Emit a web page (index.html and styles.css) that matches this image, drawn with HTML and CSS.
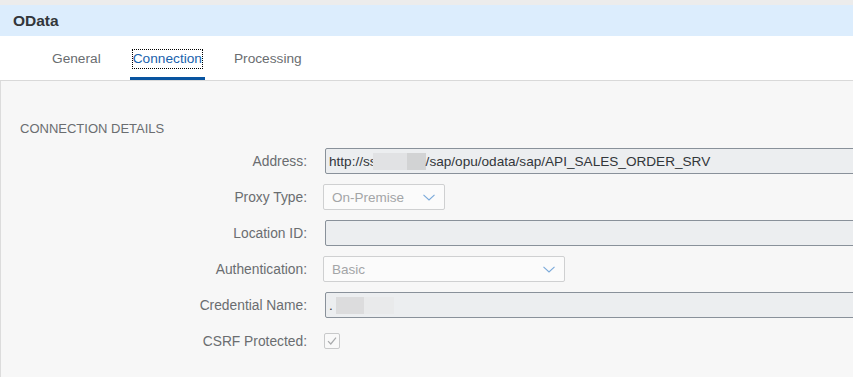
FILE: index.html
```html
<!DOCTYPE html>
<html>

<head>
  <link rel="stylesheet" href="styles.css">
</head>

<body>
  <div class="top-strip"></div>
  <div class="header">OData</div>

  <div class="tabbar">
    <div class="tab"><span class="tab-text">General</span></div>
    <div class="tab active"><span class="tab-text focus">Connection</span></div>
    <div class="tab"><span class="tab-text">Processing</span></div>
  </div>

  <div class="content">
    <div class="section-title">CONNECTION DETAILS</div>

    <div class="form">
      <label class="label">Address:</label>
      <div class="input readonly">http://ss<span class="blur blur-light"></span><span class="blur blur-dark"></span>/sap/opu/odata/sap/API_SALES_ORDER_SRV</div>

      <label class="label">Proxy Type:</label>
      <div class="select select-short">
        <span>On-Premise</span>
        <svg class="chevron" width="12" height="7" viewBox="0 0 12 7"><path d="M0.5 0.8 L6 6 L11.5 0.8" fill="none" stroke="#7aa9da" stroke-width="1.1"/></svg>
      </div>

      <label class="label">Location ID:</label>
      <div class="input readonly"></div>

      <label class="label">Authentication:</label>
      <div class="select select-long">
        <span>Basic</span>
        <svg class="chevron" width="12" height="7" viewBox="0 0 12 7"><path d="M0.5 0.8 L6 6 L11.5 0.8" fill="none" stroke="#7aa9da" stroke-width="1.1"/></svg>
      </div>

      <label class="label">Credential Name:</label>
      <div class="input readonly">.<span class="blur blur-mid"></span><span class="blur blur-pale"></span></div>

      <label class="label">CSRF Protected:</label>
      <div class="checkbox">
        <svg width="14" height="14" viewBox="0 0 14 14"><path d="M3 7.2 L5.8 10 L11 3.6" fill="none" stroke="#a9abad" stroke-width="1.2"/></svg>
      </div>
    </div>
  </div>
</body>

</html>
```

FILE: styles.css
```css
body {
  margin: 0;
  padding: 0;
  width: 100vw;
  height: 100vh;
  overflow: hidden;
  display: flex;
  flex-direction: column;
  background-color: #f7f7f7;
  font-family: 'Liberation Sans', Arial, sans-serif;
  color: #32363a;
}

.top-strip {
  height: 5px;
  flex-shrink: 0;
  background-color: #ececec;
}

.header {
  height: 31px;
  flex-shrink: 0;
  display: flex;
  align-items: center;
  padding-left: 13px;
  background-color: #dcedfd;
  font-size: 15.5px;
  font-weight: bold;
  color: #32363a;
}

.tabbar {
  display: flex;
  flex-shrink: 0;
  gap: 26px;
  height: 44px;
  padding-left: 49px;
  background-color: #ffffff;
  border-bottom: 1px solid #d9d9d9;
}

.tab {
  box-sizing: border-box;
  height: 44px;
  padding: 14px 3px 0;
  border-bottom: 3px solid transparent;
  font-size: 13.7px;
  line-height: 18px;
  color: #6a6d70;
}

.tab.active {
  border-bottom-color: #0854a0;
  color: #1a62ad;
}

.tab-text {
  display: inline-block;
  height: 18px;
}

.focus {
  outline: 1px dotted #000000;
  outline-offset: 0;
}

.content {
  flex: 1;
  padding: 40px 0 0 19px;
  border-left: 1px solid #dcdcdc;
}

.section-title {
  font-size: 13px;
  line-height: 16px;
  color: #6a6d70;
  margin-bottom: 6px;
}

.form {
  display: grid;
  grid-template-columns: 287px 560px;
  grid-auto-rows: 36px;
  column-gap: 16px;
  align-items: center;
}

.label {
  text-align: right;
  font-size: 13.8px;
  color: #6a6d70;
}

.input {
  box-sizing: border-box;
  height: 26px;
  margin-left: 2px;
  padding: 0 3px;
  display: flex;
  align-items: center;
  font-size: 13.6px;
  white-space: nowrap;
  border-radius: 2px;
}

.readonly {
  background-color: #eceef0;
  border: 1px solid #89919a;
}

.blur {
  display: inline-block;
  height: 17px;
}

.blur-light {
  width: 34px;
  margin-left: -4px;
  background-color: #e1e2e4;
}

.blur-dark {
  width: 19px;
  background-color: #d2d3d4;
}

.blur-mid {
  width: 28px;
  margin-left: 3px;
  background-color: #dcdcdd;
}

.blur-pale {
  width: 30px;
  background-color: #e9eaeb;
}

.select {
  box-sizing: border-box;
  height: 26px;
  display: flex;
  align-items: center;
  justify-content: space-between;
  padding: 0 9px 0 8px;
  background-color: #fbfbfb;
  border: 1px solid #cfd0d1;
  border-radius: 2px;
  font-size: 13.5px;
  color: #a3a5a7;
}

.select-short {
  width: 122px;
}

.select-long {
  width: 242px;
}

.checkbox {
  box-sizing: border-box;
  width: 16px;
  height: 16px;
  margin-left: 1px;
  display: flex;
  align-items: center;
  justify-content: center;
  background-color: #f9f9f9;
  border: 1px solid #c8c9ca;
  border-radius: 2px;
}
```
